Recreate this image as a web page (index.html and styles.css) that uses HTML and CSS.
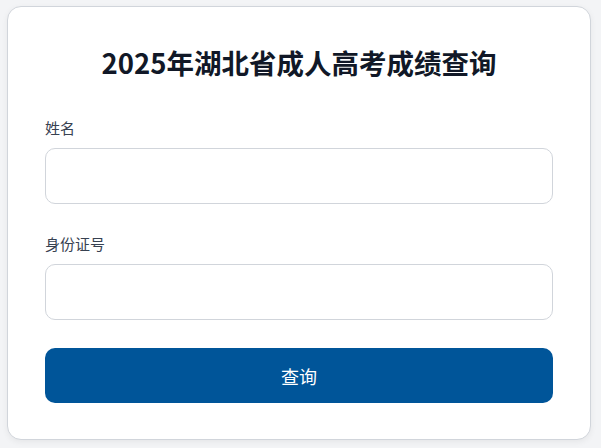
FILE: index.html
```html
<!DOCTYPE html>
<html lang="zh-CN">
<head>
<meta charset="utf-8">
<title>2025年湖北省成人高考成绩查询</title>
<link rel="stylesheet" href="styles.css">
</head>
<body>
<div class="card">
  <h1 class="title">2025年湖北省成人高考成绩查询</h1>
  <div class="field">
    <label class="label" for="name">姓名</label>
    <input class="input" id="name" type="text">
  </div>
  <div class="field">
    <label class="label" for="idno">身份证号</label>
    <input class="input" id="idno" type="text">
  </div>
  <button class="btn" type="button">查询</button>
</div>
</body>
</html>
```

FILE: styles.css
```css
html, body {
  margin: 0;
  padding: 0;
}
body {
  background: #f3f4f6;
  font-family: "Noto Sans CJK SC", "Noto Sans", sans-serif;
  padding: 6px 10px 0 7px;
  width: 601px;
  height: 448px;
  box-sizing: border-box;
  overflow: hidden;
}
.card {
  background: #ffffff;
  border: 1px solid #d1d5db;
  border-radius: 14px;
  box-shadow: 0 2px 6px rgba(0,0,0,0.06);
  padding: 35px 37px 35px 37px;
  box-sizing: border-box;
  width: 584px;
  height: 434px;
}
.title {
  margin: 0 0 36px 0;
  text-align: center;
  font-size: 27.5px;
  line-height: 40px;
  font-weight: 700;
  color: #111827;
}
.field {
  margin-bottom: 28px;
}
.field + .field {
  padding-top: 2px;
}
.label {
  display: block;
  font-size: 15px;
  line-height: 20px;
  color: #374151;
  margin-bottom: 10px;
}
.input {
  display: block;
  width: 100%;
  height: 56px;
  box-sizing: border-box;
  border: 1px solid #d1d5db;
  border-radius: 10px;
  background: #fff;
  padding: 0 14px;
  font-size: 16px;
  font-family: inherit;
  outline: none;
}
.btn {
  display: block;
  width: 100%;
  height: 55px;
  border: none;
  border-radius: 10px;
  background: #005599;
  color: #ffffff;
  font-family: inherit;
  font-size: 18px;
  cursor: pointer;
}
```
